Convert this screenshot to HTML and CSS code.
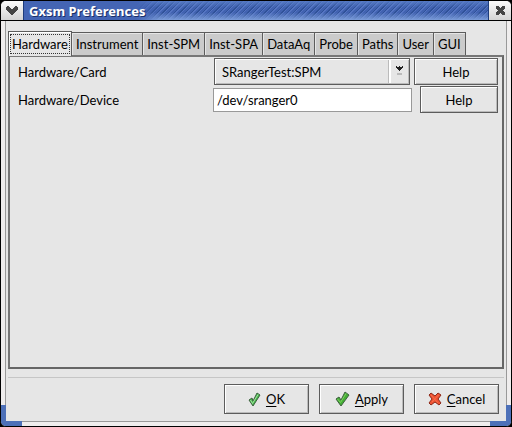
FILE: index.html
```html
<!DOCTYPE html>
<html lang="en">
<head>
<meta charset="utf-8">
<title>Gxsm Preferences</title>
<link rel="stylesheet" href="styles.css">
</head>
<body>
<div class="window">
  <header class="titlebar">
    <button class="frame-button" type="button" aria-label="Window menu">
      <svg width="12" height="9" viewBox="0 0 12 9" shape-rendering="crispEdges"><path fill="#444" d="M0 1h1V0h2v1h1v1h1v1h2V2h1V1h1V0h2v1h1v3h-1v1h-1v1H9v1H8v1H7v1H5V8H4V7H3V6H2V5H1V4H0z"/></svg>
    </button>
    <h1 class="title">Gxsm Preferences</h1>
    <button class="frame-button" type="button" aria-label="Close">
      <svg width="11" height="11" viewBox="0 0 11 11" shape-rendering="crispEdges"><path fill="#444" d="M1 1h3v1h1v1h1V2h1V1h3v3H9v1H8v1h1v1h1v3H7V9H6V8H5v1H4v1H1V7h1V6h1V5H2V4H1z"/></svg>
    </button>
  </header>
  <main class="body">
    <div class="tabs" role="tablist">
      <button class="tab active" type="button" role="tab" aria-selected="true"><span>Hardware</span></button>
      <button class="tab" type="button" role="tab">Instrument</button>
      <button class="tab" type="button" role="tab">Inst-SPM</button>
      <button class="tab" type="button" role="tab">Inst-SPA</button>
      <button class="tab" type="button" role="tab">DataAq</button>
      <button class="tab" type="button" role="tab">Probe</button>
      <button class="tab" type="button" role="tab">Paths</button>
      <button class="tab" type="button" role="tab">User</button>
      <button class="tab" type="button" role="tab">GUI</button>
    </div>
    <section class="panel" role="tabpanel">
      <div class="row">
        <label for="card">Hardware/Card</label>
        <div class="combo">
          <select id="card"><option>SRangerTest:SPM</option></select>
          <svg class="arrow" width="7" height="10" viewBox="0 0 7 10" shape-rendering="crispEdges"><path fill="#222" d="M0 0h1v1h2V0h1v1h2V0h1v2H6v1H5v1H4v1H3V4H2V3H1V2H0z"/><path fill="#bbb" d="M1 7h5v2H1z"/></svg>
        </div>
        <button class="push help" type="button">Help</button>
      </div>
      <div class="row">
        <label for="device">Hardware/Device</label>
        <input class="entry" id="device" type="text" value="/dev/sranger0">
        <button class="push help small" type="button">Help</button>
      </div>
    </section>
    <footer class="actions">
      <button class="push action" type="button">
        <svg width="13" height="15" viewBox="0 0 13 15"><path fill="#43b649" stroke="#3f5f40" d="M1 8l3-2 1 3 4-8 3 2-7 11z"/><path fill="none" stroke="#a8e2a5" d="M2.500 8l2 3.500 5.500-9"/></svg>
        <span><u>O</u>K</span>
      </button>
      <button class="push action" type="button">
        <svg width="15" height="16" viewBox="0 0 15 16"><path fill="#43ae35" stroke="#3f5f40" d="M1 8l3-2 2 3 4-8 4 3-8 11z"/><path fill="none" stroke="#7ed060" d="M2.500 8l3 3.500 5.500-9"/></svg>
        <span><u>A</u>pply</span>
      </button>
      <button class="push action" type="button">
        <svg width="14" height="14" viewBox="0 0 14 14"><path fill="#ee5233" stroke="#8c2a1a" d="M1 3l2-2 4 3 3-3 3 2-3 4 3 4-2 2-4-3-4 3-2-2 3-4z"/><path fill="none" stroke="#f8704c" d="M3 3l7 8M10.500 3L4 10"/></svg>
        <span><u>C</u>ancel</span>
      </button>
    </footer>
  </main>
  <i class="grip left"></i>
  <i class="grip right"></i>
</div>
</body>
</html>
```
FILE: styles.css
```css
* { box-sizing: border-box; }
body {
  margin: 0;
  background: #000;
  font: 13px/16px "Lato", "Noto Sans", sans-serif;
  color: #000;
}
button, input, select { font: inherit; color: inherit; margin: 0; border-radius: 0; }
.window {
  position: relative;
  display: flex;
  flex-direction: column;
  min-height: 100vh;
  border: 1px solid #000;
  border-radius: 6px;
  overflow: hidden;
  background: #efeded;
}
.titlebar {
  display: flex;
  height: 20px;
  border-bottom: 1px solid #000;
}
.frame-button {
  display: flex;
  align-items: center;
  justify-content: center;
  width: 22px;
  padding: 0;
  border: 0;
  background: linear-gradient(#fafafa, #d4d4d4);
}
.title {
  flex: 1;
  margin: 0;
  padding-left: 5px;
  border: solid #1e3c7c;
  border-width: 0 1px;
  background:
    linear-gradient(90deg, #4465b4 0, #4465b4 112px, #4465b400 135px),
    linear-gradient(#5a7fc8cc, #3f62b000 35%, #3f62b000 60%, #7fa0dcee),
    repeating-linear-gradient(135deg, #4162b0 0 2px, #2f5198 2px 3px, #5474c2 3px 4px);
  color: #fff;
  font: bold 13px/20px "Noto Sans", sans-serif;
  text-shadow: 1px 1px #1a2f66;
}
.body {
  flex: 1;
  display: flex;
  flex-direction: column;
  margin: 0 4px 4px;
  padding: 10px 2px 7px;
  border: solid #999;
  border-width: 0 1px 1px;
  background: #e6e6e6;
}
.tabs { display: flex; align-items: flex-end; }
.tab {
  height: 23px;
  padding: 0 4px;
  border: 1px solid #5c5c5c;
  border-width: 1px 1px 0 0;
  background: #cbcbcb;
  box-shadow: inset 1px 1px #e6e6e6;
}
.tab.active {
  position: relative;
  height: 25px;
  margin-bottom: -1px;
  padding: 0 2px;
  border-left-width: 1px;
  background: #e6e6e6;
  box-shadow: inset 1px 1px #fff;
}
.tab.active span { display: block; padding: 1px; outline: 1px dotted #333; }
.panel {
  flex: 1;
  display: flex;
  flex-direction: column;
  gap: 1px;
  padding: 1px 4px 1px 3px;
  border: 2px solid #5c5c5c;
  border-color: #777 #666 #666 #777;
}
.row { display: flex; align-items: center; height: 27px; }
.row label { width: 200px; padding-left: 5px; }
.combo { position: relative; flex: 1; margin-left: 1px; }
.combo select {
  appearance: none;
  display: block;
  width: 100%;
  height: 27px;
  padding: 0 7px;
  border: 1px solid #5c5c5c;
  background: #e6e6e6;
  box-shadow: inset 1px 1px #fff, inset -1px -1px #bbb;
}
.combo::after {
  content: "";
  position: absolute;
  top: 2px;
  right: 19px;
  width: 2px;
  height: 23px;
  border-left: 1px solid #bbb;
  background: #fff;
}
.arrow { position: absolute; top: 8px; right: 7px; }
.entry {
  flex: 1;
  min-width: 0;
  height: 24px;
  padding: 0 3px;
  border: 1px solid #999;
  background: #fff;
}
.push {
  padding: 0;
  border: 1px solid #5c5c5c;
  background: #e6e6e6;
  box-shadow: inset 1px 1px #fff, inset -1px -1px #bbb;
}
.help { width: 84px; height: 27px; margin-left: 4px; }
.help.small { width: 78px; margin-left: 8px; }
.actions {
  display: flex;
  justify-content: flex-end;
  gap: 10px;
  margin-top: 8px;
  padding: 6px 5px 0;
  border-top: 1px solid #c6c6c6;
}
.action {
  display: flex;
  align-items: center;
  justify-content: center;
  gap: 5px;
  width: 85px;
  height: 30px;
}
.action u { text-underline-offset: 2px; }
.grip {
  position: absolute;
  bottom: 0;
  width: 21px;
  height: 21px;
  border: solid #4d70b8;
  border-width: 0 0 5px;
}
.grip.left { left: 0; border-left-width: 5px; border-bottom-left-radius: 4px; }
.grip.right { right: 0; border-right-width: 5px; border-bottom-right-radius: 4px; }
```
